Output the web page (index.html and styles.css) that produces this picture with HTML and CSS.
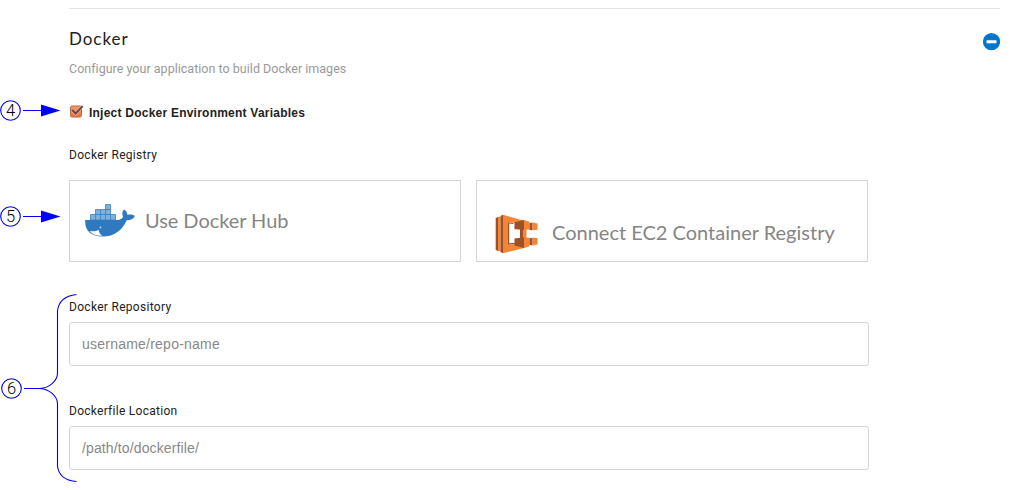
FILE: index.html
```html
<!DOCTYPE html>
<html lang="en">
<head>
<meta charset="utf-8">
<title>Docker</title>
<link rel="stylesheet" href="styles.css">
</head>
<body>
<main class="panel">
  <header class="head">
    <div>
      <h2 class="title">Docker</h2>
      <p class="subtitle"><span>Configure your application to build Docker images</span></p>
    </div>
    <svg class="collapse" width="18" height="18" viewBox="0 0 18 18"><circle cx="9.500" cy="8.700" r="8.600" fill="#0077cc"/><rect x="4.500" y="7.200" width="10" height="3" rx=".5" fill="#fff"/></svg>
  </header>
  <div class="check">
    <svg width="15" height="14" viewBox="0 0 15 14"><defs><linearGradient id="box" x2="0" y2="1"><stop stop-color="#f39a72"/><stop offset="1" stop-color="#ec7144"/></linearGradient></defs><rect x="1.500" y="1" width="11" height="11" rx="1.500" fill="url(#box)" stroke="#b5684a"/><path d="M3.500 5.200 6.600 8.700 13.400 1.300" fill="none" stroke="#f8c2aa" stroke-width="2.800"/><path d="M3.300 5 6.600 8.500 13.600 1.100" fill="none" stroke="#6b4536" stroke-width="1.900"/></svg>
    <span class="check-label">Inject Docker Environment Variables</span>
  </div>
  <div class="label registry-label"><span>Docker Registry</span></div>
  <div class="cards">
    <div class="card hub">
      <svg width="50" height="33" viewBox="0 0 50 33">
        <g fill="#7fb0dc" stroke="#3b82c1" stroke-width=".8"><path d="M5.500 10.500h25V16h-25zM10.500 5.500h15v5h-15zM20.500 .5h5v5h-5z"/><path d="M10.500 10.500V16M15.500 5.500V16M20.500 5.500V16M25.500 10.500V16" fill="none"/></g>
        <path d="M.2 16H32c3.200 0 5.300-1.200 6.100-3.200-1.200-2.200-1.100-5 .8-7.200 2.300 1.300 3.500 3.300 3.500 5.300 2.500-.6 5.300-.2 7.500 1-1.500 3-4 4.300-8.200 4.300C37.300 26 29.600 32.500 17.500 32.500 6 32.500-.5 27 .2 16z" fill="#2f7abf"/>
        <path d="M4.500 27.200c4.400.4 7-.1 9.300-1.200 0 2 1 4.400 3.500 5.800-5.600.2-9.500-1.300-12.800-4.600z" fill="#fff"/><circle cx="15.500" cy="23.500" r="1" fill="#b9d3ea"/>
      </svg>
      <span class="card-text">Use Docker Hub</span>
    </div>
    <div class="card ecr">
      <svg width="43" height="40" viewBox="0 0 43 40">
        <path d="M.7 4 3 3v34l-2.300-1z" fill="#9d5025"/><path d="M3 3h2.500v34H3z" fill="#f58536"/><path d="M5.500 2 8 .8v38.400L5.500 38z" fill="#9d5025"/>
        <path d="M8 .8 30 7v3L19 8.800 13 8.300v22.400l7-.8 10 1v2.800L8 39.200z" fill="#f58536"/><path d="M13 8.300 18.500 9v1L14.200 9.500v19.800l5.800-.6v1.100l-7 .9z" fill="#9d5025"/>
        <path d="M25 15h3.500v9H25z" fill="#9d5025"/><path d="M28.500 14.500H31.500v10h-3z" fill="#f58536"/>
        <path d="M19.500 8.300 29 6v9.800l-9.500-.6z" fill="#9d5025"/><path d="m29 6 5.500 1.800v7.700L29 15.800z" fill="#f58536"/>
        <path d="m34.500 9.300 3-.8v7.800l-3-.3z" fill="#9d5025"/><path d="m37.500 8.500 5 1v6.300l-5 .5z" fill="#f58536"/>
        <path d="m19.500 24.500 9.500-1.200V34l-9.500-2.500z" fill="#9d5025"/><path d="m29 23.300 5.500.5v8.400L29 34z" fill="#f58536"/>
        <path d="m34.500 24.300 3-.5v7.700l-3-.8z" fill="#9d5025"/><path d="m37.500 23.800 5 .3v6.300l-5 1.100z" fill="#f58536"/>
      </svg>
      <span class="card-text ecr-text">Connect EC2 Container Registry</span>
    </div>
  </div>
  <div class="field">
    <label class="label repo" for="repo"><span>Docker Repository</span></label>
    <input id="repo" class="input" placeholder="username/repo-name">
  </div>
  <div class="field">
    <label class="label loc" for="loc"><span>Dockerfile Location</span></label>
    <input id="loc" class="input" placeholder="/path/to/dockerfile/">
  </div>
</main>
<svg class="notes" width="80" height="490" viewBox="0 0 80 490">
  <g fill="none" stroke="#0000f0" stroke-width="1.100">
    <circle cx="10.500" cy="110.500" r="9.800"/><circle cx="10.500" cy="216.500" r="9.800"/><circle cx="11.500" cy="388.500" r="9.800"/>
    <path d="M23 110.500h20M23 216.500h20M24 388.500H40C49 388 57.500 381 57.500 373V311Q59 296.500 76.500 294.500M40 388.500C49 389 57.500 396 57.500 404V466Q59 480 76.500 481.500"/>
  </g>
  <path d="M41 104.500 60.500 110.500 41 116.500zM41 210.500 60.500 216.500 41 222.500z" fill="#00f"/>
  <g class="note-text" text-anchor="middle"><text x="10.500" y="116">4</text><text x="10.500" y="222">5</text><text x="11.500" y="394">6</text></g>
</svg>
</body>
</html>
```
FILE: styles.css
```css
* { box-sizing: border-box; }
body { margin: 0; background: #fff; position: relative; height: 490px; overflow: hidden; font-family: Lato, "Open Sans", sans-serif; color: #222; }
.panel { width: 931px; margin-left: 69px; padding-top: 8px; }
.head { display: flex; justify-content: space-between; border-top: 1px solid #e2e2e2; height: 87px; padding-top: 18px; }
.title { margin: 0; font-size: 17px; line-height: 24px; font-weight: 400; letter-spacing: .95px; color: #222; }
.subtitle { margin: 9px 0 0; font-size: 12.5px; line-height: 18px; font-family: Roboto, sans-serif; letter-spacing: .02px; color: #999; }
.collapse { margin-top: 6px; }
.check { display: flex; align-items: center; gap: 5px; height: 34px; }
.check-label { font: bold 12px/16px "Liberation Sans", sans-serif; letter-spacing: .23px; padding-top: 1px; }
.label { display: block; font: 12px/16px Roboto, sans-serif; letter-spacing: .3px; color: #222; }
.registry-label { margin-top: 18px; }
.cards { display: flex; gap: 15px; margin-top: 17px; }
.card { width: 392px; height: 82px; border: 1px solid #d5d5d5; display: flex; align-items: flex-start; }
.card-text { font-size: 20px; line-height: 26px; color: #858585; white-space: nowrap; }
.hub { padding: 23px 0 0 15px; gap: 10px; }
.hub .card-text { margin-top: 3px; letter-spacing: -.05px; }
.ecr { padding: 33px 0 0 18px; gap: 14px; }
.ecr .card-text { margin-top: 5px; }
.field { margin-top: 37px; }
.field + .field { margin-top: 37px; }
.input { display: block; width: 800px; height: 44px; margin-top: 7px; padding: 0 12px; border: 1px solid #d5d5d5; border-radius: 3px; background: #fff; font: 14px "Liberation Sans", sans-serif; letter-spacing: .23px; }
.input::placeholder { color: #888; opacity: 1; }
.loc { letter-spacing: .27px; }
#loc { letter-spacing: .13px; }
.notes { position: absolute; left: 0; top: 0; pointer-events: none; }
.note-text { font: 300 16.5px Roboto, "Liberation Sans", sans-serif; fill: #000; }
```
